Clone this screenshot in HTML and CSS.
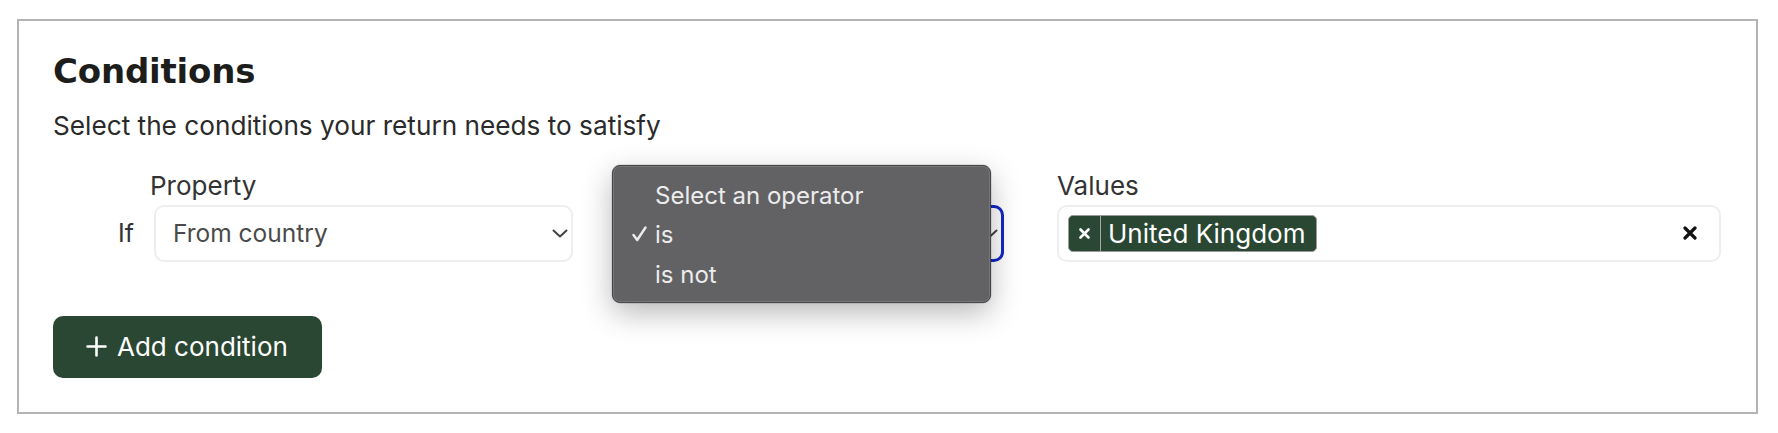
FILE: index.html
```html
<!DOCTYPE html>
<html lang="en">
<head>
<meta charset="utf-8">
<title>Conditions</title>
<link rel="stylesheet" href="styles.css">
</head>
<body>
<section class="card">
  <h2 class="title">Conditions</h2>
  <p class="subtitle">Select the conditions your return needs to satisfy</p>

  <div class="row">
    <div class="if-cell">If</div>

    <div class="field field-property">
      <label class="label label-property">Property</label>
      <div class="control">
        <span class="control-text">From country</span>
        <svg class="chevron" width="16" height="9" viewBox="0 0 16 9"><path d="M1.5 1.5 L8 7.5 L14.5 1.5" fill="none" stroke="#444" stroke-width="2" stroke-linecap="round" stroke-linejoin="round"/></svg>
      </div>
    </div>

    <div class="field field-operator">
      <span class="label label-empty" aria-label="Operator"></span>
      <div class="control control-focus" aria-label="is">
        <span class="control-text"></span>
        <svg class="chevron" width="16" height="9" viewBox="0 0 16 9"><path d="M1.5 1.5 L8 7.5 L14.5 1.5" fill="none" stroke="#444" stroke-width="2" stroke-linecap="round" stroke-linejoin="round"/></svg>
      </div>
      <ul class="popup">
        <li class="popup-item">Select an operator</li>
        <li class="popup-item popup-item-checked">
          <svg class="check" width="15" height="16" viewBox="0 0 15 16"><path d="M1.5 9 L5.2 14 L13.5 1.5" fill="none" stroke="#ececec" stroke-width="2.4" stroke-linecap="round" stroke-linejoin="round"/></svg>is
        </li>
        <li class="popup-item">is not</li>
      </ul>
    </div>

    <div class="field field-values">
      <label class="label">Values</label>
      <div class="control control-multi">
        <span class="chip">
          <span class="chip-remove">
            <svg width="11" height="11" viewBox="0 0 11 11"><path d="M1.5 1.5 L9.5 9.5 M9.5 1.5 L1.5 9.5" fill="none" stroke="#fff" stroke-width="2.6" stroke-linecap="round"/></svg>
          </span>
          <span class="chip-label">United Kingdom</span>
        </span>
        <span class="clear">
          <svg width="14" height="14" viewBox="0 0 14 14"><path d="M2 2 L12 12 M12 2 L2 12" fill="none" stroke="#111" stroke-width="3.2" stroke-linecap="round"/></svg>
        </span>
      </div>
    </div>
  </div>

  <button class="add-btn" type="button">
    <svg class="plus" width="21" height="21" viewBox="0 0 21 21"><path d="M10.5 1.5 V19.5 M1.5 10.5 H19.5" fill="none" stroke="#fff" stroke-width="2.6" stroke-linecap="round"/></svg>
    <span>Add condition</span>
  </button>
</section>
</body>
</html>
```

FILE: styles.css
```css
* { box-sizing: border-box; }

html, body {
  margin: 0;
  padding: 0;
  background: #ffffff;
}

body {
  font-family: "Inter", "Liberation Sans", sans-serif;
  color: #2b2b2b;
  padding: 19px 20px 0 17px;
}

.card {
  border: 2px solid #b4b4b4;
  padding: 31px 35px 34px 34px;
  background: #fff;
}

.title {
  margin: 0;
  font-family: "DejaVu Sans", "Inter", sans-serif;
  font-weight: 700;
  font-size: 34px;
  line-height: 38px;
  letter-spacing: -0.2px;
  color: #1d1d1b;
}

.subtitle {
  margin: 20px 0 0 0;
  font-size: 26.2px;
  line-height: 32px;
  color: #2a2a2a;
}

.row {
  display: flex;
  align-items: flex-end;
  margin-top: 27.6px;
}

.if-cell {
  width: 81px;
  margin-right: 20px;
  text-align: right;
  font-size: 25px;
  line-height: 57px;
  color: #333;
}

.field {
  display: flex;
  flex-direction: column;
  gap: 3.4px;
}

.field-property { width: 419px; }
.field-operator { width: 378px; margin-left: 53px; position: relative; }
.field-values { width: 664px; margin-left: 53px; }

.label {
  display: block;
  height: 32px;
  font-size: 26px;
  line-height: 32px;
  color: #333;
}

.label-property { margin-left: -4px; }

.control {
  height: 57px;
  border: 2px solid #eeeeee;
  border-radius: 10px;
  display: flex;
  align-items: center;
  padding: 0 3px 0 17px;
  background: #fff;
}

.control-text {
  flex: 1;
  font-size: 24.5px;
  color: #4a4a4a;
}

.chevron { display: block; }

.control-focus {
  border: 3px solid #1329c4;
}

.control-multi {
  padding: 0 22px 0 9px;
}

.chip {
  display: flex;
  align-items: stretch;
  height: 37px;
  background: #2a4733;
  border: 1px solid #9a9a9a;
  border-radius: 5px;
  color: #fff;
}

.chip-remove {
  width: 32px;
  display: flex;
  align-items: center;
  justify-content: center;
  border-right: 1px solid #a6a6a6;
}

.chip-remove svg { display: block; }

.chip-label {
  display: flex;
  align-items: center;
  padding: 0 11px 0 7px;
  font-size: 26px;
  color: #fff;
}

.clear {
  margin-left: auto;
  display: flex;
  align-items: center;
}

.clear svg { display: block; }

.popup {
  position: absolute;
  left: -14px;
  top: -4.6px;
  width: 379px;
  height: 138px;
  margin: 0;
  padding: 9.5px 0 8px 0;
  list-style: none;
  background: #626265;
  border: 1px solid #48484a;
  border-radius: 8px;
  box-shadow: 0 10px 30px rgba(0, 0, 0, 0.28), 0 0 0 0.5px rgba(0,0,0,0.2), inset 0 0 0 1px rgba(255,255,255,0.12);
  z-index: 10;
}

.popup-item {
  position: relative;
  height: 39.5px;
  display: flex;
  align-items: center;
  padding-left: 42px;
  font-size: 24px;
  color: #ececec;
}

.check {
  position: absolute;
  left: 19px;
  top: 11px;
}

.add-btn {
  margin-top: 54px;
  height: 62px;
  width: 269px;
  display: flex;
  align-items: center;
  gap: 10px;
  padding: 0 0 0 33px;
  border: none;
  border-radius: 10px;
  background: #2a4733;
  color: #fff;
  font-family: "Inter", "Liberation Sans", sans-serif;
  font-size: 26px;
  cursor: pointer;
}

.plus { display: block; }
```
